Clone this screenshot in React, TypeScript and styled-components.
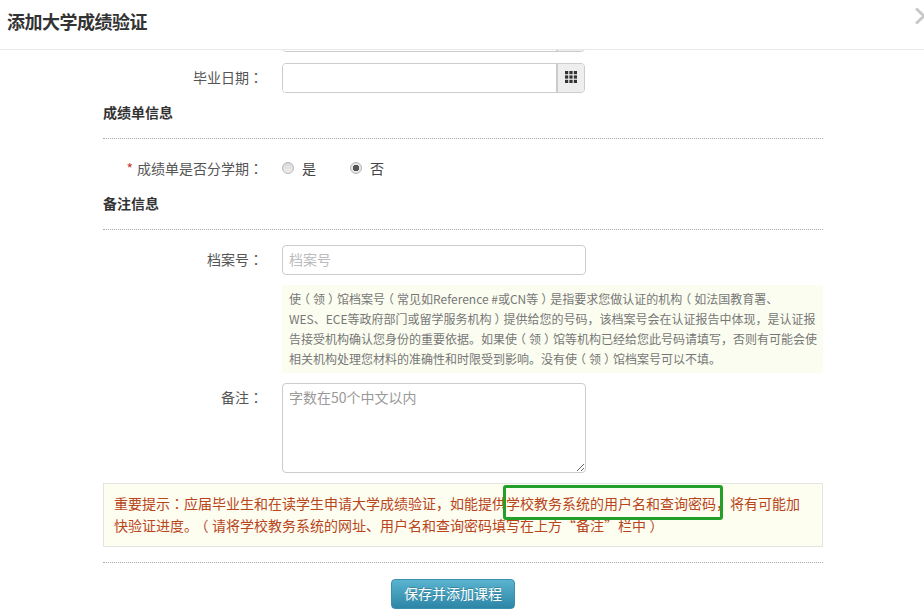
import React, {FC} from 'react';
import styled, {createGlobalStyle} from 'styled-components';

const GlobalStyle = createGlobalStyle`
  html, body {
    margin: 0;
    padding: 0;
    background: #fff;
    overflow: hidden;
  }
  body {
    font-family: "Noto Sans CJK SC", "Liberation Sans", sans-serif;
    font-size: 14px;
    color: #555;
    text-spacing-trim: space-all;
  }
`;

const HINT_LINES = [
  '使（领）馆档案号（常见如Reference #或CN等）是指要求您做认证的机构（如法国教育署、',
  'WES、ECE等政府部门或留学服务机构）提供给您的号码，该档案号会在认证报告中体现，是认证报',
  '告接受机构确认您身份的重要依据。如果使（领）馆等机构已经给您此号码请填写，否则有可能会使',
  '相关机构处理您材料的准确性和时限受到影响。没有使（领）馆档案号可以不填。',
];

const ALERT_LINES = [
  '重要提示：应届毕业生和在读学生申请大学成绩验证，如能提供学校教务系统的用户名和查询密码，将有可能加',
  '快验证进度。（请将学校教务系统的网址、用户名和查询密码填写在上方“备注”栏中）',
];

// the original font centres these marks in their box
const Copy: FC<{text: string}> = ({text}) => (
  <>
    {text.split(/([（）：])/).map((part, i) => {
      if (i % 2 === 0) return <React.Fragment key={i}>{part}</React.Fragment>;
      if (part === '：') return <ColonMark key={i}>{part}</ColonMark>;
      return <ParenMark key={i}>{part}</ParenMark>;
    })}
  </>
);

const CalendarIcon: FC = () => (
  <svg width="12" height="12" viewBox="0 0 12 12" fill="#333">
    {[0, 4.4, 8.8].map((y) =>
      [0, 4.4, 8.8].map((x) => <rect key={`${x}-${y}`} x={x} y={y} width="3.2" height="3.2" />),
    )}
  </svg>
);

type FieldProps = {
  label?: string;
  required?: boolean;
  children: React.ReactNode;
};

const Field: FC<FieldProps> = ({label, required, children}) => (
  <Row>
    <Label>
      {required && <Star>*</Star>}
      {label && <Copy text={`${label}：`} />}
    </Label>
    {children}
  </Row>
);

const DateInput: FC = () => (
  <DateBox>
    <DateText />
    <DateAddon>
      <CalendarIcon />
    </DateAddon>
  </DateBox>
);

export default function App() {
  return (
    <Dialog>
      <GlobalStyle />
      <Header>
        <Title>添加大学成绩验证</Title>
        <CloseIcon viewBox="0 0 9 18" fill="none">
          <path d="M1 1.5 L9 9 L1 16.5" stroke="#c8c8c8" strokeWidth="3" />
        </CloseIcon>
      </Header>
      <Body>
        <ClippedRow>
          <Field>
            <DateInput />
          </Field>
        </ClippedRow>
        <Field label="毕业日期">
          <DateInput />
        </Field>

        <SectionTitle>成绩单信息</SectionTitle>
        <Divider />
        <RadioRow>
          <Field label="成绩单是否分学期" required>
            <RadioGroup>
              <RadioOption>
                <Radio />是
              </RadioOption>
              <RadioOption>
                <Radio checked />否
              </RadioOption>
            </RadioGroup>
          </Field>
        </RadioRow>

        <SectionTitle>备注信息</SectionTitle>
        <Divider />
        <FileRow>
          <Field label="档案号">
            <TextInput placeholder="档案号" />
          </Field>
        </FileRow>
        <Hint>
          {HINT_LINES.map((line) => (
            <Line key={line}>
              <Copy text={line} />
            </Line>
          ))}
        </Hint>
        <Field label="备注">
          <NoteInput placeholder="字数在50个中文以内" />
        </Field>

        <Alert>
          {ALERT_LINES.map((line) => (
            <Line key={line}>
              <Copy text={line} />
            </Line>
          ))}
          <Highlight />
        </Alert>
        <FooterDivider />
        <Actions>
          <SaveButton>保存并添加课程</SaveButton>
        </Actions>
      </Body>
    </Dialog>
  );
}

const Dialog = styled.div`
  width: 924px;
  height: 614px;
  overflow: hidden;
  background: #fff;
`;

const Header = styled.header`
  height: 50px;
  box-sizing: border-box;
  padding: 0 0 8px 7px;
  display: flex;
  align-items: center;
  justify-content: space-between;
  border-bottom: 1px solid #e8e8e8;
`;

const Title = styled.h1`
  margin: 0;
  font-size: 18px;
  line-height: 30px;
  font-weight: 700;
  letter-spacing: -0.5px;
  color: #333;
`;

const CloseIcon = styled.svg`
  width: 9px;
  height: 18px;
  margin-top: -10px;
`;

const Body = styled.main`
  width: 720px;
  margin-left: 103px;
  height: 564px;
  overflow: hidden;
`;

const ClippedRow = styled.div`
  margin-top: -28px;
  margin-bottom: 11px;
`;

const Row = styled.div`
  display: flex;
  align-items: flex-start;
`;

const Label = styled.label`
  flex: 0 0 160px;
  margin-right: 19px;
  text-align: right;
  font-size: 14px;
  line-height: 28px;
  color: #555;
  white-space: nowrap;
`;

const Line = styled.span`
  display: block;
  white-space: nowrap;
`;

const ColonMark = styled.span`
  font-family: "Noto Sans CJK TC", "Noto Sans CJK SC", sans-serif;
`;

const ParenMark = styled.span`
  padding: 0 0.25em;
  font-feature-settings: "halt";
`;

const Star = styled.span`
  color: #c0392b;
  margin-right: 4px;
`;

const DateBox = styled.div`
  width: 303px;
  height: 30px;
  display: flex;
  box-sizing: border-box;
  border: 1px solid #ccc;
  border-radius: 4px;
  overflow: hidden;
`;

const DateText = styled.div`
  flex: 1;
  background: #fff;
`;

const DateAddon = styled.div`
  width: 26px;
  display: flex;
  align-items: center;
  justify-content: center;
  background: #eee;
  border-left: 2px solid #ccc;
  svg {
    margin-top: -3px;
  }
`;

const SectionTitle = styled.h2`
  margin: 10px 0 0;
  padding-bottom: 2px;
  font-size: 14px;
  line-height: 18px;
  font-weight: 700;
  color: #333;
`;

const Divider = styled.div`
  margin-top: 15px;
  border-top: 1px dotted #aaa;
`;

const RadioRow = styled.div`
  margin-top: 15px;
  padding-bottom: 2px;
`;

const RadioGroup = styled.div`
  display: flex;
  gap: 34px;
  height: 28px;
  align-items: center;
`;

const RadioOption = styled.span`
  display: flex;
  align-items: center;
  gap: 8px;
  font-size: 14px;
  color: #444;
`;

const Radio = styled.i<{checked?: boolean}>`
  width: 12px;
  height: 12px;
  box-sizing: border-box;
  border-radius: 50%;
  border: 1px solid #b5b5b5;
  background: ${(props) =>
    props.checked
      ? 'radial-gradient(circle, #555 0 3px, #e6e6e6 3.5px)'
      : 'linear-gradient(#d8d8d8, #f0f0f0)'};
`;

const FileRow = styled.div`
  margin-top: 15px;
`;

const TextInput = styled.input`
  width: 304px;
  height: 30px;
  box-sizing: border-box;
  padding: 0 6px 2px;
  border: 1px solid #ccc;
  border-radius: 4px;
  outline: none;
  font: inherit;
  font-size: 14px;
  &::placeholder {
    color: #bbb;
  }
`;

const Hint = styled.div`
  margin: 10px 0 10px 179px;
  padding: 4px 7px;
  height: 88px;
  box-sizing: border-box;
  background: #fbfdf0;
  font-size: 12px;
  line-height: 20px;
  color: #777;
`;

const NoteInput = styled.textarea`
  display: block;
  width: 304px;
  height: 90px;
  box-sizing: border-box;
  padding: 3px 6px;
  border: 1px solid #ccc;
  border-radius: 4px;
  outline: none;
  font: inherit;
  font-size: 14px;
  line-height: 20px;
  &::placeholder {
    color: #999;
  }
`;

const Alert = styled.div`
  position: relative;
  margin-top: 10px;
  height: 64px;
  box-sizing: border-box;
  padding: 8px 10px;
  border: 1px solid #e4e4e4;
  background: #fdfdf0;
  font-size: 14px;
  line-height: 22px;
  color: #b8451c;
`;

const Highlight = styled.span`
  position: absolute;
  left: 399px;
  top: 1px;
  width: 220px;
  height: 35px;
  box-sizing: border-box;
  border: 3px solid #23a02a;
  border-radius: 3px;
`;

const FooterDivider = styled.div`
  margin-top: 15px;
  border-top: 1px dotted #aaa;
`;

const Actions = styled.div`
  margin-top: 16px;
  padding-right: 20px;
  display: flex;
  justify-content: center;
`;

const SaveButton = styled.button`
  width: 124px;
  height: 30px;
  padding: 0 0 3px;
  border: 1px solid #3a8fad;
  border-radius: 4px;
  background: linear-gradient(#5ab3cf, #2d86a6);
  color: #fff;
  font: inherit;
  font-size: 14px;
  text-shadow: 0 -1px 0 rgba(0, 0, 0, 0.2);
`;
